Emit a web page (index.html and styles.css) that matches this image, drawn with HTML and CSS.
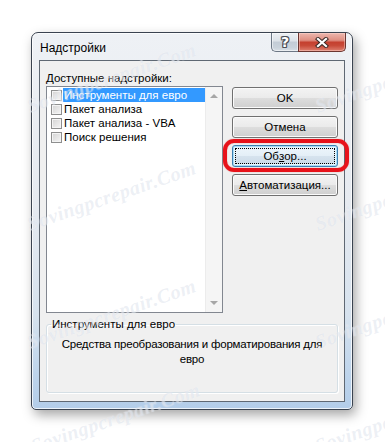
FILE: index.html
```html
<!DOCTYPE html>
<html lang="ru">
<head>
<meta charset="utf-8">
<title>Надстройки</title>
<link rel="stylesheet" href="styles.css">
</head>
<body>
<div class="stage">
  <div class="window">
    <div class="titlebar">
      <span class="title">Надстройки</span>
      <div class="caption-btns">
        <div class="cbtn help">?</div>
        <div class="cbtn close">
          <svg width="14" height="11" viewBox="0 0 14 11">
            <path d="M3 2 L11 9 M11 2 L3 9" stroke="#3d2b27" stroke-width="4.2" stroke-linecap="square" fill="none"/>
            <path d="M3 2 L11 9 M11 2 L3 9" stroke="#ffffff" stroke-width="2.2" stroke-linecap="square" fill="none"/>
          </svg>
        </div>
      </div>
    </div>
    <div class="client">
      <div class="top">
        <div class="leftcol">
          <div class="label"><u>Д</u>оступные надстройки:</div>
          <div class="listbox">
            <div class="items">
              <div class="item"><span class="cb"></span><span class="txt sel">Инструменты для евро</span></div>
              <div class="item"><span class="cb"></span><span class="txt">Пакет анализа</span></div>
              <div class="item"><span class="cb"></span><span class="txt">Пакет анализа - VBA</span></div>
              <div class="item"><span class="cb"></span><span class="txt">Поиск решения</span></div>
            </div>
            <div class="scrollbar">
              <span class="arrow up"></span>
              <span class="arrow down"></span>
            </div>
          </div>
        </div>
        <div class="btncol">
          <div class="btn">OK</div>
          <div class="btn">Отмена</div>
          <div class="btn focused">Об<u>з</u>ор...<span class="ring"></span></div>
          <div class="btn"><u>А</u>втоматизация...</div>
        </div>
      </div>
      <fieldset class="group">
        <legend>Инструменты для евро</legend>
        <p class="desc">Средства преобразования и форматирования для евро</p>
      </fieldset>
    </div>
  </div>
  <span class="wm wm1">Sovingpcrepair.Com</span>
  <span class="wm wm2">Sovingpcrepair.Com</span>
  <span class="wm wm3">Sovingpcrepair.Com</span>
  <span class="wm wm4">Sovingpcrepair.Com</span>
  <span class="wm wm5">Sovingpcrepair.Com</span>
  <span class="wm wm6">Sovingpcrepair.Com</span>
  <span class="wm wm7">Sovingpcrepair.Com</span>
  <span class="wm wm8">Sovingpcrepair.Com</span>
</div>
</body>
</html>
```
FILE: styles.css
```css
html, body {
  margin: 0;
  background: #ffffff;
}
body {
  font-family: "Liberation Sans", Arial, sans-serif;
  font-size: 11.5px;
  color: #000;
}
.stage {
  position: relative;
  width: 385px;
  height: 442px;
  overflow: hidden;
  padding: 32px 0 0 31px;
  box-sizing: border-box;
}
.window {
  width: 322px;
  height: 378px;
  box-sizing: border-box;
  border: 1px solid #3a4350;
  border-radius: 7px 7px 5px 5px;
  background: linear-gradient(to bottom, #eef1f5 0%, #e6eaf0 45%, #d6e2ee 75%, #bcd3eb 92%, #b3cde9 100%);
  box-shadow: inset 0 0 0 1px rgba(255,255,255,0.75), 3px 5px 12px rgba(0,0,0,0.35);
  padding: 0 7px 7px 7px;
  display: flex;
  flex-direction: column;
}
.titlebar {
  height: 27px;
  display: flex;
  align-items: flex-start;
  padding-left: 1px;
}
.title {
  font-size: 12px;
  line-height: 15px;
  padding-top: 8px;
  color: #000;
}
.caption-btns {
  margin-left: auto;
  margin-right: -1px;
  display: flex;
}
.cbtn {
  height: 19px;
  box-sizing: border-box;
  display: flex;
  align-items: center;
  justify-content: center;
}
.help {
  width: 27px;
  border: 1px solid #6c7785;
  border-top: none;
  border-right: none;
  border-radius: 0 0 0 5px;
  background: linear-gradient(to bottom, #edf0f3 0%, #dce2e8 45%, #c3ccd6 50%, #c9d2db 80%, #d8dfe6 100%);
  box-shadow: inset 0 0 0 1px rgba(255,255,255,0.5);
  font-family: "DejaVu Sans", sans-serif;
  font-weight: bold;
  font-size: 14px;
  line-height: 16px;
  color: #fff;
  text-shadow: 1px 0 0 #4a4f57, -1px 0 0 #4a4f57, 0 1px 0 #4a4f57, 0 -1px 0 #4a4f57, 1px 1px 0 #4a4f57, -1px -1px 0 #4a4f57, 1px -1px 0 #4a4f57, -1px 1px 0 #4a4f57;
}
.close {
  width: 48px;
  border: 1px solid #6b3530;
  border-top: none;
  border-radius: 0 0 5px 0;
  background: linear-gradient(to bottom, #ecb7ae 0%, #df8f82 40%, #c5402f 52%, #c84a38 70%, #de8070 100%);
  box-shadow: inset 0 0 0 1px rgba(255,220,210,0.45);
}
.close svg { display: block; }

.client {
  flex: 1;
  border: 1px solid #5f6873;
  background: #f0f0f0;
  padding: 9px 6px 8px 6px;
  display: flex;
  flex-direction: column;
  box-sizing: border-box;
}
.top {
  display: flex;
  gap: 9px;
}
.leftcol {
  display: flex;
  flex-direction: column;
}
.label {
  line-height: 16px;
  height: 16px;
}
.listbox {
  width: 177px;
  height: 227px;
  box-sizing: border-box;
  border: 1px solid #828790;
  background: #fff;
  display: flex;
}
.items {
  flex: 1;
  padding-top: 1px;
}
.item {
  height: 14px;
  display: flex;
  align-items: center;
}
.cb {
  width: 11px;
  height: 11px;
  box-sizing: border-box;
  margin-left: 4px;
  margin-right: 1px;
  border: 1px solid #8e8f8f;
  background: linear-gradient(135deg, #d3d3d3 0%, #e6e6e6 55%, #f6f6f6 100%);
  box-shadow: inset 0 0 0 1px #f4f4f4;
  flex: none;
}
.txt {
  flex: 1;
  line-height: 14px;
  height: 14px;
  padding-left: 1px;
  white-space: nowrap;
}
.sel {
  background: #3399ff;
  color: #fff;
}
.scrollbar {
  width: 17px;
  background: #f5f5f5;
  border-left: 1px solid #ececec;
  box-sizing: border-box;
  display: flex;
  flex-direction: column;
  justify-content: space-between;
  align-items: center;
  padding: 7px 0 7px 0;
}
.arrow {
  width: 0;
  height: 0;
  border-left: 4px solid transparent;
  border-right: 4px solid transparent;
}
.arrow.up { border-bottom: 4px solid #a7a7a7; }
.arrow.down { border-top: 4px solid #a7a7a7; }

.btncol {
  display: flex;
  flex-direction: column;
  gap: 7px;
  padding-top: 17px;
}
.btn {
  position: relative;
  width: 106px;
  height: 22px;
  box-sizing: border-box;
  border: 1px solid #707070;
  border-radius: 3px;
  background: linear-gradient(to bottom, #f3f3f3 0%, #ebebeb 48%, #dddddd 52%, #cfcfcf 100%);
  box-shadow: inset 0 0 0 1px #fbfbfb;
  display: flex;
  align-items: center;
  justify-content: center;
  line-height: 14px;
}
.btn.focused {
  border-color: #3c7fb1;
  box-shadow: inset 0 0 0 1px #a9dcf6, inset 0 0 0 2px #e6f5fd;
  background: linear-gradient(to bottom, #eef6fb 0%, #e4eff7 48%, #d6e3ee 52%, #c9d9e6 100%);
  outline: 1px dotted #000;
  outline-offset: -4px;
}
.ring {
  position: absolute;
  top: -7px;
  bottom: -6px;
  left: -10px;
  right: -12px;
  border: 4px solid #e8121a;
  border-radius: 11px;
  box-shadow: 0 0 1px rgba(200,0,0,0.6), inset 0 0 1px rgba(200,0,0,0.6);
  pointer-events: none;
}

.group {
  flex: 1;
  margin: 4px 0 0 0;
  padding: 0;
  min-width: 0;
  border: 1px solid #d5dfe5;
  border-radius: 3px;
  box-shadow: inset 1px 1px 0 #fff, 1px 1px 0 #fff;
  box-sizing: border-box;
}
.group legend {
  margin-left: 4px;
  padding: 0 1px;
  line-height: 15px;
}
.desc {
  margin: 5px 0 0 0;
  padding: 0 2px;
  text-align: center;
  line-height: 15px;
  letter-spacing: -0.2px;
}

.wm {
  position: absolute;
  left: 0;
  top: 0;
  font-family: "Liberation Serif", serif;
  font-style: italic;
  font-weight: bold;
  font-size: 20px;
  letter-spacing: 0.5px;
  color: rgba(160, 176, 202, 0.2);
  text-shadow: 0 0 1px rgba(255,255,255,0.6);
  transform-origin: 0 0;
  transform: rotate(-19deg);
  white-space: nowrap;
  pointer-events: none;
}
.wm1 { left: 24px; top: 96px; }
.wm2 { left: 24px; top: 214px; }
.wm3 { left: 24px; top: 332px; }
.wm4 { left: 28px; top: 436px; }
.wm5 { left: 312px; top: 96px; }
.wm6 { left: 312px; top: 214px; }
.wm7 { left: 312px; top: 332px; }
.wm8 { left: 312px; top: 436px; }
```
